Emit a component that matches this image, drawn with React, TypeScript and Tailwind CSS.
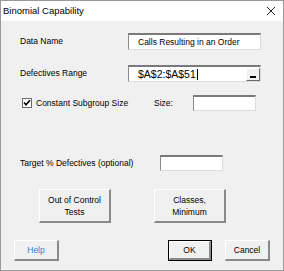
import { ReactNode } from "react";

const font = { fontFamily: '"Liberation Sans", Arial, sans-serif' };

const TextBox = ({ className, children }: { className: string; children?: ReactNode }) => (
    <div
        className={`relative flex items-center bg-white border-t-2 border-l border-t-[#7a7a7a] border-l-[#8a8a8a] border-r border-b border-r-[#dcdcdc] border-b-[#dcdcdc] ${className}`}
    >
        {children}
    </div>
);

const Button = ({
    className,
    children,
    isDefault,
}: {
    className: string;
    children: ReactNode;
    isDefault?: boolean;
}) => (
    <div className={`${isDefault ? "border border-black" : ""} ${className}`}>
        <div className="w-full h-full bg-[#f0f0f0] border-t border-l border-t-white border-l-white border-r-2 border-b-2 border-r-[#8a8a8a] border-b-[#8a8a8a] flex items-center justify-center text-center leading-[12px]">
            {children}
        </div>
    </div>
);

const App = () => {
    return (
        <div
            className="w-[284px] h-[271px] border border-[#9a9a9a] flex flex-col text-[8.5px] text-black overflow-hidden"
            style={font}
        >
            {/* title bar */}
            <div className="h-[20px] bg-white flex items-center justify-between pl-[2px] pr-[7px] shrink-0">
                <span className="text-[9.5px]">Binomial Capability</span>
                <svg width="10" height="10" viewBox="0 0 10 10">
                    <path d="M1 1 L9 9 M9 1 L1 9" stroke="#222" strokeWidth="1" />
                </svg>
            </div>

            <div className="flex-1 bg-[#f0f0f0] flex flex-col pl-[19px]">
                {/* Data Name */}
                <div className="flex items-center mt-[12px] h-[17px]">
                    <span className="w-[108px]">Data Name</span>
                    <TextBox className="w-[133px] h-[17px] pl-[9px]">
                        <span>Calls Resulting in an Order</span>
                    </TextBox>
                </div>

                {/* Defectives Range */}
                <div className="flex items-center mt-[15px] h-[17px]">
                    <span className="w-[108px]">Defectives Range</span>
                    <TextBox className="w-[133px] h-[17px] pl-[9px]">
                        <span className="text-[10.5px] leading-none">$A$2:$A$51</span>
                        <span className="w-px h-[11px] bg-black ml-[1px]" />
                        <div className="absolute right-0 top-[1px] w-[14px] h-[13px] bg-[#f0f0f0] border-t border-l border-t-white border-l-white border-r border-b border-r-[#6a6a6a] border-b-[#6a6a6a] flex items-end justify-center pb-[2px]">
                            <span className="w-[6px] h-[2px] bg-black" />
                        </div>
                    </TextBox>
                </div>

                {/* Constant subgroup */}
                <div className="flex items-center mt-[13px] h-[16px]">
                    <div className="ml-[2px] w-[10px] h-[10px] bg-white border border-[#6a6a6a] flex items-center justify-center">
                        <svg width="8" height="8" viewBox="0 0 8 8">
                            <path d="M1 3.5 L3 5.8 L7 1.2" stroke="#000" strokeWidth="1.6" fill="none" />
                        </svg>
                    </div>
                    <span className="ml-[4px] w-[118px]">Constant Subgroup Size</span>
                    <span className="w-[39px]">Size:</span>
                    <TextBox className="w-[63px] h-[16px]" />
                </div>

                {/* Target */}
                <div className="flex items-center mt-[44px] h-[16px]">
                    <span className="w-[140px]">Target % Defectives (optional)</span>
                    <TextBox className="w-[63px] h-[16px]" />
                </div>

                {/* option buttons */}
                <div className="flex mt-[18px] h-[34px]">
                    <Button className="ml-[19px] w-[72px] h-[34px]">
                        <span>
                            Out of Control
                            <br />
                            Tests
                        </span>
                    </Button>
                    <Button className="ml-[43px] w-[72px] h-[34px]">
                        <span>
                            Classes,
                            <br />
                            Minimum
                        </span>
                    </Button>
                </div>

                {/* bottom buttons */}
                <div className="flex mt-[17px] h-[21px]">
                    <Button className="-ml-[6px] w-[45px] h-[21px]">
                        <span className="text-[#3a7fd6]">Help</span>
                    </Button>
                    <Button isDefault className="ml-[109px] w-[44px] h-[21px]">
                        <span>OK</span>
                    </Button>
                    <Button className="ml-[13px] w-[45px] h-[21px]">
                        <span>Cancel</span>
                    </Button>
                </div>
            </div>
        </div>
    );
};

export default App;
